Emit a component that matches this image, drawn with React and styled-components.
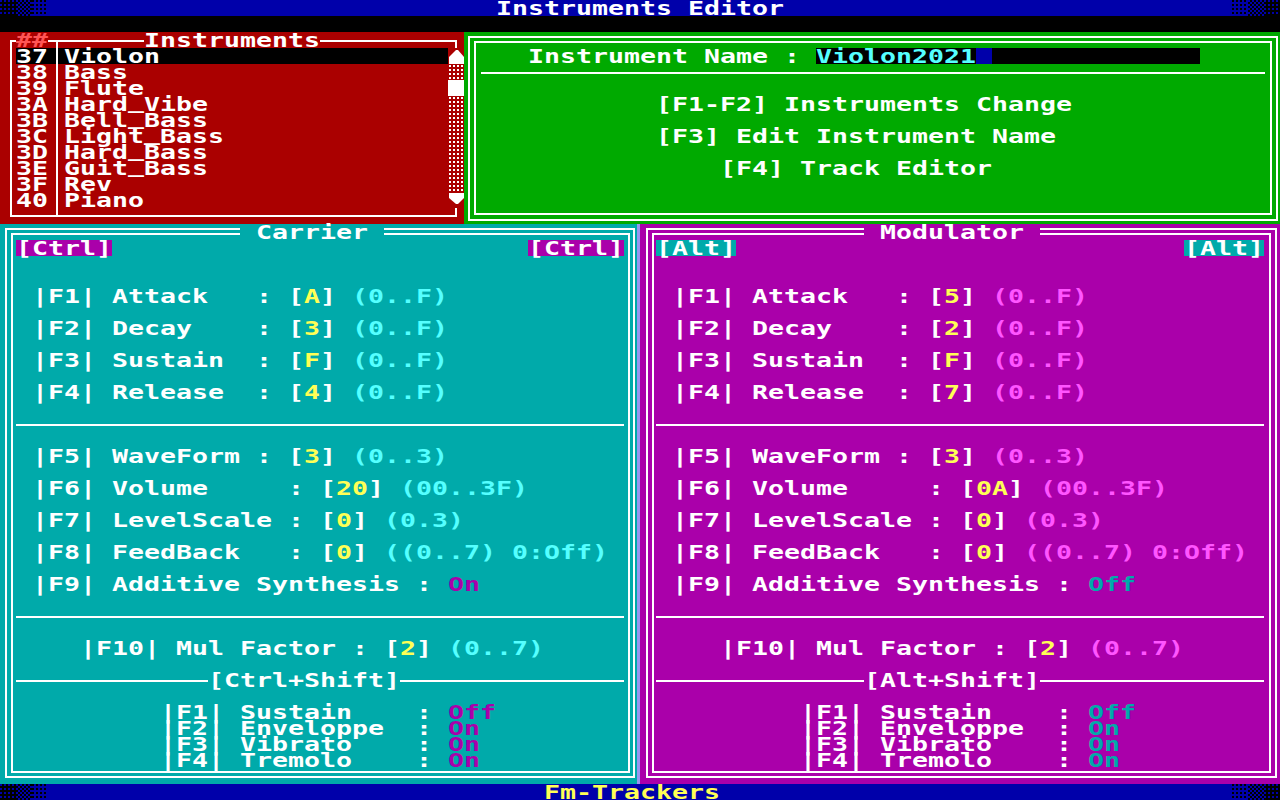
import React from 'react';
import styled, { createGlobalStyle, css } from 'styled-components';

const C = {
  blue: '#0000AA',
  red: '#AA0000',
  green: '#00AA00',
  cyan: '#00AAAA',
  magenta: '#AA00AA',
  white: '#FFFFFF',
  yellow: '#FFFF55',
  lcyan: '#55FFFF',
  lmagenta: '#FF55FF',
  lred: '#FF5555',
  black: '#000000',
  seam: '#9A96F0',
};

const Global = createGlobalStyle`
  html, body { margin: 0; padding: 0; background: #000; }
  #root { width: 1280px; height: 800px; }
`;

const Screen = styled.div`
  width: 1280px;
  height: 800px;
  display: flex;
  flex-direction: column;
  overflow: hidden;
  background: ${C.black};
  font-family: "DejaVu Sans Mono", "Liberation Mono", monospace;
`;

/* ---------- text-mode cells ---------- */
const Cells = styled.span`
  display: flex;
  flex: none;
  width: ${(p) => p.$n * 16}px;
  height: 16px;
  background: ${(p) => p.$bg || 'transparent'};
  ${(p) => p.$raised && css`position: relative; z-index: 1;`}
`;

const Glyphs = styled.span`
  display: block;
  white-space: pre;
  font-family: "DejaVu Sans Mono", "Liberation Mono", monospace;
  font-weight: bold;
  font-size: 19px;
  line-height: 16px;
  height: 16px;
  color: ${(p) => p.$color || C.white};
  transform: scaleX(1.3987);
  transform-origin: 0 0;
`;

const Under = styled.span`
  display: inline-block;
  transform: translateY(-3px);
`;

const renderGlyphs = (s) =>
  s.includes('_')
    ? s.split(/(_)/).map((part, i) => (part === '_' ? <Under key={i}>_</Under> : part))
    : s;

const Text = ({ children, color, bg, raised }) => {
  const s = String(children);
  return (
    <Cells $n={s.length} $bg={bg} $raised={raised}>
      <Glyphs $color={color}>{renderGlyphs(s)}</Glyphs>
    </Cells>
  );
};

const Row = styled.div`
  display: flex;
  flex: none;
  height: 16px;
  padding-left: ${(p) => (p.$col || 0) * 16}px;
`;

const Stack = styled.div`
  display: flex;
  flex-direction: column;
  gap: ${(p) => p.$gap || 0}px;
  padding-top: ${(p) => p.$top || 0}px;
`;

const Divider = styled.div`
  flex: none;
  height: 16px;
  display: flex;
  align-items: flex-start;
  padding: 0 ${(p) => p.$right}px 0 ${(p) => p.$left}px;
`;

const Rule = styled.div`
  height: 2px;
  margin-top: 8px;
  background: ${C.white};
  ${(p) => (p.$w ? css`width: ${p.$w}px; flex: none;` : css`flex: 1;`)}
`;

/* ---------- bars ---------- */
const Bar = styled.header`
  flex: none;
  height: 16px;
  display: flex;
  background: ${C.blue};
  justify-content: ${(p) => p.$justify || 'flex-start'};
`;

const Blank = styled.div`
  flex: none;
  height: 16px;
  background: ${C.black};
`;

const DitherGroup = styled.div`
  display: flex;
  flex: none;
`;

const dotPattern = (dot, base) => css`
  background-color: ${dot};
  background-image: linear-gradient(90deg, transparent 2px, ${base} 2px),
    linear-gradient(transparent 2px, ${base} 2px);
  background-size: 4px 4px;
`;

const DitherCell = styled.div`
  width: 16px;
  height: 16px;
  ${(p) =>
    p.$level === 3
      ? dotPattern(C.blue, C.black)
      : p.$level === 2
      ? css`background: repeating-conic-gradient(${C.black} 0 25%, ${C.blue} 0 50%) 0 0 / 4px 4px;`
      : dotPattern(C.black, C.blue)}
`;

const Dither = ({ right }) => (
  <DitherGroup>
    {(right ? [1, 2, 3] : [3, 2, 1]).map((l) => (
      <DitherCell key={l} $level={l} />
    ))}
  </DitherGroup>
);

const StatusSpacer = styled.div`
  flex: 1;
  display: flex;
  padding-left: 496px;
`;

/* ---------- top section ---------- */
const TopSection = styled.div`
  display: flex;
  flex: none;
  height: 192px;
`;

const InstrumentsPanel = styled.section`
  position: relative;
  flex: none;
  width: 464px;
  height: 192px;
  display: flex;
  flex-direction: column;
  background: ${C.red};
  &::before {
    content: '';
    position: absolute;
    top: 8px;
    left: 10px;
    right: 7px;
    bottom: 7px;
    border: 2px solid ${C.white};
  }
  &::after {
    content: '';
    position: absolute;
    top: 8px;
    bottom: 7px;
    left: 56px;
    width: 2px;
    background: ${C.white};
  }
`;

const PanelTitleRow = styled.div`
  display: flex;
  flex: none;
  height: 16px;
  padding-left: ${(p) => (p.$col || 0) * 16}px;
  gap: ${(p) => (p.$gap || 0) * 16}px;
`;

const ListArea = styled.div`
  display: flex;
  padding-left: 16px;
`;

const List = styled.div`
  display: flex;
  flex-direction: column;
  width: 432px;
`;

const ListRow = styled.div`
  display: flex;
  height: 16px;
  background: ${(p) => (p.$selected ? C.black : 'transparent')};
`;

const ScrollBar = styled.div`
  position: relative;
  z-index: 1;
  width: 16px;
  display: flex;
  flex-direction: column;
  background: ${C.red};
`;

const ScrollTrack = styled.div`
  height: ${(p) => p.$rows * 16}px;
  background-color: ${C.white};
  background-image: linear-gradient(90deg, transparent 2px, ${C.red} 2px),
    linear-gradient(transparent 2px, ${C.red} 2px);
  background-size: 4px 4px;
  background-position: 1px 1px;
`;

const ScrollThumb = styled.div`
  height: 16px;
  background: ${C.white};
`;

const ArrowIcon = styled.svg`
  display: block;
  width: 16px;
  height: 16px;
`;

const UpArrow = () => (
  <ArrowIcon viewBox="0 0 16 16">
    <polygon points="8,2 10,2 16,9 16,16 1,16 1,9" fill="#fff" />
  </ArrowIcon>
);

const DownArrow = () => (
  <ArrowIcon viewBox="0 0 16 16">
    <polygon points="1,1 16,1 16,6 10,12 8,12 1,6" fill="#fff" />
  </ArrowIcon>
);

const InfoPanel = styled.section`
  position: relative;
  flex: 1;
  height: 192px;
  display: flex;
  flex-direction: column;
  padding-top: 16px;
  box-sizing: border-box;
  background: ${C.green};
  &::before {
    content: '';
    position: absolute;
    top: 4px;
    left: 4px;
    right: 2px;
    bottom: 3px;
    border: 2px solid ${C.white};
  }
  &::after {
    content: '';
    position: absolute;
    top: 9px;
    left: 10px;
    right: 8px;
    bottom: 9px;
    border: 2px solid ${C.white};
  }
`;

const Field = styled.div`
  display: flex;
  width: 384px;
  height: 16px;
  background: ${C.black};
`;

const Cursor = styled.div`
  width: 16px;
  height: 16px;
  background: ${C.blue};
`;

/* ---------- operator panels ---------- */
const MidSection = styled.div`
  display: flex;
  flex: none;
  height: 560px;
`;

const frameLine = (inset) => css`
  content: '';
  position: absolute;
  inset: ${inset};
  border: 2px solid ${C.white};
`;

const OperatorPanel = styled.section`
  position: relative;
  flex: none;
  width: 640px;
  height: 560px;
  display: flex;
  flex-direction: column;
  background: ${(p) => p.$bg};
  box-shadow: ${(p) => (p.$seam ? `inset -3px 0 0 ${C.seam}` : 'none')};
  &::before {
    ${(p) => frameLine(p.$outer)}
  }
  &::after {
    ${(p) => frameLine(p.$inner)}
  }
`;

const BadgeRow = styled.div`
  display: flex;
  flex: none;
  height: 16px;
  justify-content: space-between;
  padding: 0 16px;
`;

const Toggles = styled.div`
  display: flex;
  flex-direction: column;
`;

const Operator = ({ op }) => {
  const env = ['Attack', 'Decay', 'Sustain', 'Release'];
  const toggles = ['Sustain', 'Enveloppe', 'Vibrato', 'Tremolo'];
  const title = ` ${op.title} `;
  const shift = `[${op.key}+Shift]`;
  const param = (fk, label, pad, value, range) => (
    <Row $col={2} key={fk}>
      <Text>{`|${fk}| ${label.padEnd(pad)}: [`}</Text>
      <Text color={C.yellow}>{value}</Text>
      <Text>{'] '}</Text>
      <Text color={op.range}>{range}</Text>
    </Row>
  );
  return (
    <OperatorPanel $bg={op.bg} $outer={op.outer} $inner={op.inner} $seam={op.seam}>
      <PanelTitleRow $col={Math.floor((40 - title.length) / 2)}>
        <Text bg={op.bg} raised>
          {title}
        </Text>
      </PanelTitleRow>
      <BadgeRow>
        <Text bg={op.badge}>{`[${op.key}]`}</Text>
        <Text bg={op.badge}>{`[${op.key}]`}</Text>
      </BadgeRow>
      <Stack $gap={16} $top={32}>
        <Stack $gap={16}>
          {env.map((e, i) => param(`F${i + 1}`, e, 9, op.env[i], '(0..F)'))}
        </Stack>
        <Divider $left={16} $right={16}>
          <Rule />
        </Divider>
        <Stack $gap={16}>
          {param('F5', 'WaveForm', 9, op.wave, '(0..3)')}
          {param('F6', 'Volume', 11, op.volume, '(00..3F)')}
          {param('F7', 'LevelScale', 11, op.level, '(0.3)')}
          {param('F8', 'FeedBack', 11, op.feedback, '((0..7) 0:Off)')}
          <Row $col={2}>
            <Text>{'|F9| Additive Synthesis : '}</Text>
            <Text color={op.toggle}>{op.additive}</Text>
          </Row>
        </Stack>
        <Divider $left={16} $right={16}>
          <Rule />
        </Divider>
        <Row $col={5}>
          <Text>{'|F10| Mul Factor : ['}</Text>
          <Text color={C.yellow}>{op.mul}</Text>
          <Text>{'] '}</Text>
          <Text color={op.range}>(0..7)</Text>
        </Row>
        <Divider $left={16} $right={16}>
          <Rule $w={(25 - shift.length - 1) * 16} />
          <Text>{shift}</Text>
          <Rule />
        </Divider>
        <Toggles>
          {toggles.map((t, i) => (
            <Row $col={10} key={t}>
              <Text>{`|F${i + 1}| ${t.padEnd(11)}: `}</Text>
              <Text color={op.toggle}>{op.toggles[i]}</Text>
            </Row>
          ))}
        </Toggles>
      </Stack>
    </OperatorPanel>
  );
};

const carrier = {
  title: 'Carrier',
  key: 'Ctrl',
  bg: C.cyan,
  badge: C.magenta,
  range: C.lcyan,
  toggle: C.magenta,
  seam: true,
  outer: '4px 5px 6px 5px',
  inner: '9px 10px 11px 11px',
  env: ['A', '3', 'F', '4'],
  wave: '3',
  volume: '20',
  level: '0',
  feedback: '0',
  additive: 'On',
  mul: '2',
  toggles: ['Off', 'On', 'On', 'On'],
};

const modulator = {
  title: 'Modulator',
  key: 'Alt',
  bg: C.magenta,
  badge: C.cyan,
  range: C.lmagenta,
  toggle: C.cyan,
  seam: false,
  outer: '4px 3px 6px 6px',
  inner: '9px 9px 11px 12px',
  env: ['5', '2', 'F', '7'],
  wave: '3',
  volume: '0A',
  level: '0',
  feedback: '0',
  additive: 'Off',
  mul: '2',
  toggles: ['Off', 'On', 'On', 'On'],
};

const instruments = [
  ['37', 'Violon'],
  ['38', 'Bass'],
  ['39', 'Flute'],
  ['3A', 'Hard_Vibe'],
  ['3B', 'Bell_Bass'],
  ['3C', 'Light_Bass'],
  ['3D', 'Hard_Bass'],
  ['3E', 'Guit_Bass'],
  ['3F', 'Rev'],
  ['40', 'Piano'],
];

export default function App() {
  return (
    <>
      <Global />
      <Screen>
        <Bar $justify="space-between">
          <Dither />
          <Text>Instruments Editor</Text>
          <Dither right />
        </Bar>
        <Blank />
        <TopSection>
          <InstrumentsPanel>
            <PanelTitleRow $col={1} $gap={6}>
              <Text color={C.lred} bg={C.red} raised>
                ##
              </Text>
              <Text bg={C.red} raised>
                Instruments
              </Text>
            </PanelTitleRow>
            <ListArea>
              <List>
                {instruments.map(([n, name], i) => (
                  <ListRow key={n} $selected={i === 0}>
                    <Text>{`${n} ${name}`}</Text>
                  </ListRow>
                ))}
              </List>
              <ScrollBar>
                <UpArrow />
                <ScrollTrack $rows={1} />
                <ScrollThumb />
                <ScrollTrack $rows={6} />
                <DownArrow />
              </ScrollBar>
            </ListArea>
          </InstrumentsPanel>
          <InfoPanel>
            <Row $col={4}>
              <Text>{'Instrument Name : '}</Text>
              <Field>
                <Text color={C.lcyan}>Violon2021</Text>
                <Cursor />
              </Field>
            </Row>
            <Divider $left={17} $right={15}>
              <Rule />
            </Divider>
            <Stack $gap={16} $top={16}>
              <Row $col={12}>
                <Text>[F1-F2] Instruments Change</Text>
              </Row>
              <Row $col={12}>
                <Text>[F3] Edit Instrument Name</Text>
              </Row>
              <Row $col={16}>
                <Text>[F4] Track Editor</Text>
              </Row>
            </Stack>
          </InfoPanel>
        </TopSection>
        <MidSection>
          <Operator op={carrier} />
          <Operator op={modulator} />
        </MidSection>
        <Bar>
          <Dither />
          <StatusSpacer>
            <Text color={C.yellow}>Fm-Trackers</Text>
          </StatusSpacer>
          <Dither right />
        </Bar>
      </Screen>
    </>
  );
}
